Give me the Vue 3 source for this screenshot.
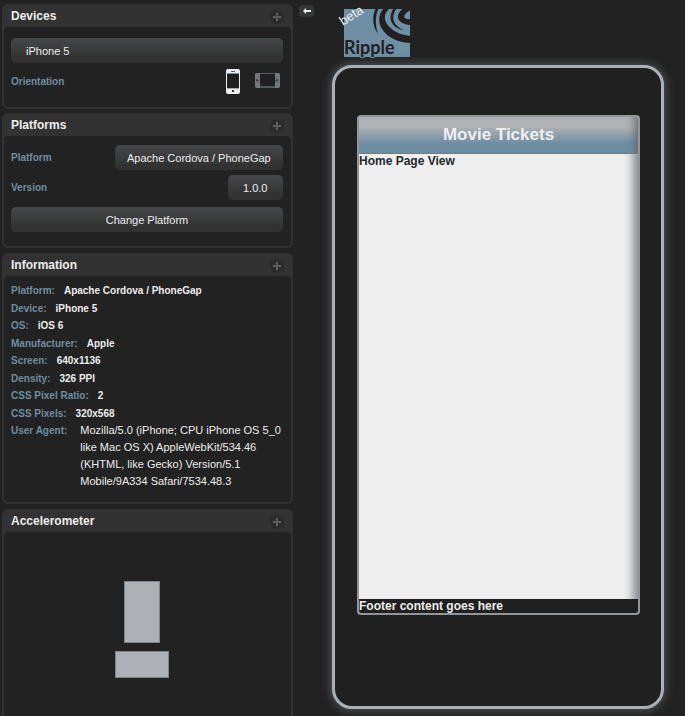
<script setup>
import { ref } from 'vue'

const device = ref('iPhone 5')
const platform = ref('Apache Cordova / PhoneGap')
const version = ref('1.0.0')
const orientation = ref('portrait')

const info = [
  ['Platform', 'Apache Cordova / PhoneGap'],
  ['Device', 'iPhone 5'],
  ['OS', 'iOS 6'],
  ['Manufacturer', 'Apple'],
  ['Screen', '640x1136'],
  ['Density', '326 PPI'],
  ['CSS Pixel Ratio', '2'],
  ['CSS Pixels', '320x568'],
]
</script>

<template>
  <div class="page">
    <aside class="sidebar">
      <section class="panel">
        <header class="panel-head">
          <h2>Devices</h2>
          <svg class="move" viewBox="0 0 14 14"><circle cx="7" cy="7" r="7" /><path d="M7 3v8M3 7h8M6 4h2M6 10h2M4 6v2M10 6v2" /></svg>
        </header>
        <div class="panel-body devices">
          <select v-model="device" class="control wide" aria-label="Device"><option>iPhone 5</option></select>
          <div class="row tall">
            <span class="label">Orientation</span>
            <div class="orient">
              <button type="button" aria-label="Portrait" @click="orientation = 'portrait'">
                <svg width="14" height="25" viewBox="0 0 14 25">
                  <rect width="14" height="25" rx="2" fill="#ededee" />
                  <rect x="1" y="4" width="12" height="1" fill="#6f8da1" />
                  <rect x="1" y="5" width="12" height="14" fill="#202020" />
                  <rect x="1" y="19" width="12" height="1" fill="#a4a7aa" />
                  <rect x="5" y="2" width="4" height="1" fill="#55595c" />
                  <rect x="6" y="21" width="2" height="2" fill="#333" />
                </svg>
              </button>
              <button type="button" aria-label="Landscape" @click="orientation = 'landscape'">
                <svg width="25" height="15" viewBox="0 0 25 15">
                  <rect width="25" height="15" rx="2" fill="#53585a" />
                  <path d="M2 0H5V15H2Q0 15 0 13V2Q0 0 2 0M20 0h3q2 0 2 2v11q0 2-2 2h-3z" fill="#74787b" />
                  <rect x="5" y="1" width="15" height="12" fill="#202020" />
                  <path d="M2 6v3M3 7v1M22 6v3M21 7v1" stroke="#26282a" fill="none" />
                </svg>
              </button>
            </div>
          </div>
        </div>
      </section>

      <section class="panel">
        <header class="panel-head">
          <h2>Platforms</h2>
          <svg class="move" viewBox="0 0 14 14"><circle cx="7" cy="7" r="7" /><path d="M7 3v8M3 7h8M6 4h2M6 10h2M4 6v2M10 6v2" /></svg>
        </header>
        <div class="panel-body platforms">
          <div class="row">
            <label class="label" for="platform">Platform</label>
            <select id="platform" v-model="platform" class="control"><option>Apache Cordova / PhoneGap</option></select>
          </div>
          <div class="row">
            <label class="label" for="version">Version</label>
            <select id="version" v-model="version" class="control short"><option>1.0.0</option></select>
          </div>
          <button type="button" class="control wide change">Change Platform</button>
        </div>
      </section>

      <section class="panel">
        <header class="panel-head">
          <h2>Information</h2>
          <svg class="move" viewBox="0 0 14 14"><circle cx="7" cy="7" r="7" /><path d="M7 3v8M3 7h8M6 4h2M6 10h2M4 6v2M10 6v2" /></svg>
        </header>
        <div class="panel-body information">
          <dl class="facts">
            <div v-for="[name, value] in info" :key="name" class="fact">
              <dt>{{ name }}:</dt>
              <dd>{{ value }}</dd>
            </div>
          </dl>
          <dl class="fact agent">
            <dt>User Agent:</dt>
            <dd>Mozilla/5.0 (iPhone; CPU iPhone OS 5_0 like Mac OS X) AppleWebKit/534.46 (KHTML, like Gecko) Version/5.1 Mobile/9A334 Safari/7534.48.3</dd>
          </dl>
        </div>
      </section>

      <section class="panel last">
        <header class="panel-head">
          <h2>Accelerometer</h2>
          <svg class="move" viewBox="0 0 14 14"><circle cx="7" cy="7" r="7" /><path d="M7 3v8M3 7h8M6 4h2M6 10h2M4 6v2M10 6v2" /></svg>
        </header>
        <div class="panel-body accel">
          <svg width="54" height="98" viewBox="0 0 54 98" aria-label="Device position">
            <g fill="#adb1b6" stroke="#7d8488">
              <rect x="9.500" y=".5" width="35" height="61" />
              <rect x=".5" y="70.500" width="53" height="26" />
            </g>
          </svg>
        </div>
      </section>
    </aside>

    <button type="button" class="collapse" aria-label="Collapse panels">
      <svg width="8" height="6" viewBox="0 0 8 6"><path d="M3 0v2h5v2H3v2L0 3z" fill="#f0f0f0" /></svg>
    </button>

    <main class="stage">
      <svg class="logo" width="78" height="58" viewBox="0 0 78 58" aria-label="Ripple beta">
        <clipPath id="plate"><rect x="12" y="9" width="66" height="48" /></clipPath>
        <g clip-path="url(#plate)">
          <rect x="12" y="9" width="66" height="48" fill="#6f8fa5" />
          <path d="M52 8C46 14 46 22 50 29C55 37 66 43 79 43V36C68 35 60 31 55 24C51 18 53 12 58 8z" fill="#202020" />
          <path d="M44 8C40 15 40 26 46 34C43 25 43 15 47 8z" fill="#202020" />
          <path d="M62 8C56 15 57 28 72 30C61 26 58 17 65 8z" fill="#202020" />
          <path d="M72 8C61 15 66 25 79 25V19C71 20 69 15 79 10V8z" fill="#202020" />
        </g>
        <text x="12" y="54" class="brand">Ripple</text>
        <text class="beta" transform="translate(11 26) rotate(-33)">beta</text>
      </svg>

      <div class="phone">
        <div class="screen">
          <h1>Movie Tickets</h1>
          <div class="view">Home Page View</div>
          <footer>Footer content goes here</footer>
        </div>
      </div>
    </main>
  </div>
</template>

<style>
body {
  background: #222;
}
</style>

<style scoped>
* {
  box-sizing: border-box;
}
.page {
  display: flex;
  align-items: stretch;
  height: 100vh;
  overflow: hidden;
  background: #222;
  color: #ededed;
  font-family: "Liberation Sans", Arial, sans-serif;
  font-size: 11px;
}
.sidebar {
  display: flex;
  flex-direction: column;
  flex: 0 0 293px;
  gap: 4px;
  padding: 4px 0 0 2px;
}
.panel {
  flex: none;
  border: 2px solid #323232;
  border-radius: 6px;
  background: #323232;
}
.panel + .panel + .panel {
  margin-top: 1px;
}
.last {
  min-height: 240px;
  display: flex;
  flex-direction: column;
}
.panel-head {
  display: flex;
  align-items: center;
  justify-content: space-between;
  height: 21px;
  padding: 0 7px;
}
h2 {
  margin: 0;
  padding-bottom: 1px;
  font-size: 12px;
  line-height: 17px;
  font-weight: bold;
}
.move {
  width: 14px;
  height: 14px;
}
.move circle {
  fill: #2b2b2b;
}
.move path {
  fill: none;
  stroke: #74787a;
}
.panel-body {
  padding: 0 8px 0 7px;
  border-radius: 4px;
  background: #222;
}
.devices {
  padding-top: 11px;
  padding-bottom: 11px;
}
.control {
  appearance: none;
  height: 25px;
  margin: 0;
  padding: 0 12px;
  border: 0;
  border-radius: 5px;
  background: linear-gradient(#454849, #323232 80%);
  color: #ededed;
  font: 11px "Liberation Sans", Arial, sans-serif;
}
.wide {
  display: block;
  width: 100%;
  padding: 0 15px;
}
.short {
  padding: 0 15px;
}
.row {
  display: flex;
  align-items: center;
  justify-content: space-between;
  height: 25px;
  margin-bottom: 5px;
}
.tall {
  height: 30px;
  margin: 3px 0 0;
}
.label {
  color: #6f8da1;
  font-size: 10px;
  font-weight: bold;
}
.orient {
  display: flex;
  align-items: center;
  gap: 15px;
  padding-right: 3px;
}
.orient button {
  display: flex;
  padding: 0;
  border: 0;
  background: none;
}
.orient button:last-child {
  padding-bottom: 2px;
}
.platforms {
  padding-top: 9px;
  padding-bottom: 14px;
}
.change {
  margin-top: 7px;
}
.information {
  padding-top: 6px;
  padding-bottom: 12px;
}
dl,
dd {
  margin: 0;
}
.facts {
  display: grid;
  grid-auto-rows: 18px 17px;
}
.fact {
  display: flex;
  gap: 9px;
  font-size: 10px;
  line-height: 17px;
  font-weight: bold;
}
.fact dt {
  flex: none;
  color: #6f8da1;
}
.agent {
  gap: 13px;
}
.agent dd {
  font-size: 11px;
  font-weight: normal;
}
.accel {
  flex: 1;
  padding-top: 49px;
  padding-right: 18px;
  text-align: center;
}
.collapse {
  display: flex;
  align-items: center;
  justify-content: center;
  flex: none;
  width: 15px;
  height: 12px;
  margin: 5px 0 0 6px;
  padding: 0;
  border: 0;
  border-radius: 4px;
  background: #343637;
}
.stage {
  display: flex;
  flex: 1;
  flex-direction: column;
  min-width: 0;
  padding: 0 21px 7px 18px;
}
.logo {
  flex: none;
  margin-bottom: 7px;
  overflow: visible;
}
.brand {
  fill: #202020;
  stroke: #6f8fa5;
  stroke-width: 2px;
  paint-order: stroke;
  font: bold 18px Lato, sans-serif;
}
.beta {
  fill: #f0f0f0;
  font: 13px "Liberation Sans", Arial, sans-serif;
}
.phone {
  display: flex;
  flex: 1;
  padding: 47px 21px 91px 22px;
  border: 3px solid #abb0b7;
  border-radius: 20px;
  background: #202020;
  box-shadow: 0 0 10px 1px #55585b;
}
.screen {
  display: flex;
  flex: 1;
  flex-direction: column;
  overflow: hidden;
  border: 2px solid #929699;
  border-radius: 4px;
  background: #efefef;
  font-size: 12px;
  font-weight: bold;
}
h1 {
  margin: 0;
  border-bottom: 1px solid #777b80;
  background: linear-gradient(#b2b2b6 25%, #6d8da3 75%);
  box-shadow: inset -10px 0 8px -7px #65696d;
  color: #efefef;
  font-size: 17px;
  line-height: 36px;
  text-align: center;
}
.view {
  flex: 1;
  line-height: 14px;
  color: #25292b;
  box-shadow: inset -14px 0 10px -9px #85898d;
}
footer {
  background: #202020;
  color: #ededed;
  line-height: 14px;
}
</style>
